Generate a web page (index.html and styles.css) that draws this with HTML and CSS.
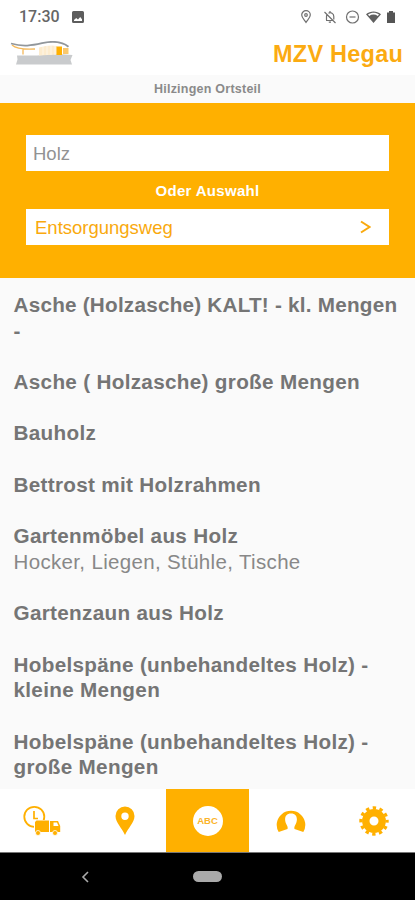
FILE: index.html
```html
<!DOCTYPE html>
<html lang="de">
<head>
<meta charset="utf-8">
<meta name="viewport" content="width=device-width">
<title>MZV Hegau</title>
<link rel="stylesheet" href="styles.css">
</head>
<body>
<div class="status">
  <span class="time">17:30</span>
  <svg class="photo" width="12" height="12" viewBox="0 0 12 12"><path fill="#5d5d5d" fill-rule="evenodd" d="M1.5 0h9A1.5 1.5 0 0 1 12 1.500v9a1.500 1.500 0 0 1-1.500 1.500h-9A1.500 1.500 0 0 1 0 10.500v-9A1.500 1.500 0 0 1 1.500 0zM2 10h8V8.200L8.200 6 6 8.500 4.200 7 2 9z"/></svg>
  <svg class="signals" width="96" height="16" viewBox="0 0 96 16" fill="none" stroke="#707070" stroke-width="1.200">
    <path d="M6 13.500C4 10.500 1.700 8.400 1.700 6a4.300 4.300 0 0 1 8.600 0C10.300 8.400 8 10.500 6 13.500z"/><circle cx="6" cy="6" r="1.300"/>
    <path d="M24.500 3l11 11M26 11.500h7.500M26.500 11V7.500c0-1 .3-1.700.8-2.300M28.500 4.200c2.200-1.200 5.300 0 5.300 3.300v3M30 2v1.500M28.800 13.200h2.200"/>
    <circle cx="52.500" cy="8" r="6"/><path d="M49.500 8h6"/>
    <path fill="#606060" stroke="none" fill-rule="evenodd" d="M66 5.200c4.500-3.700 10.500-3.700 15 0L73.500 14zM68 5.400l1.200 1.500c2.500-1.800 6-1.800 8.600 0L79 5.400c-3.200-2.200-7.500-2.200-11 0z"/>
    <path fill="#555" stroke="none" d="M87 3.500h2V2h4v1.500h2V14h-8z"/>
  </svg>
</div>
<header class="header">
  <svg class="logo" width="66" height="26" viewBox="0 0 66 26">
    <path fill="#c9cbcd" d="M7 14.500h20l20-1.500 15.500 1-2 5 1.500 4.500H6l1.500-5z"/>
    <path fill="#fdecce" d="M29 6.500q10-3 18-1.500v8.500l-18 1z"/>
    <path fill="#ffb000" d="M46.500 5.500h5.500v8.500h-5.500z"/><path fill="#f9c86d" d="M53 7h5.500v6H53z"/>
    <path stroke="#fff" stroke-width=".6" d="M33 5v9M37 5v9M41 4v10M45 4v10"/>
    <path fill="none" stroke="#f5b95a" stroke-width="1.300" d="M2 4c5 4.500 14 4.500 23 4M13 8v5.500"/>
    <path fill="none" stroke="#92979b" stroke-width="1.800" d="M1 2.500C13 6 22 4.500 32 2.200S51-.2 58.500 5.700"/>
  </svg>
  <h1 class="brand">MZV Hegau</h1>
</header>
<div class="place">Hilzingen Ortsteil</div>
<section class="search">
  <div class="field">Holz</div>
  <div class="or">Oder Auswahl</div>
  <div class="field choice"><span>Entsorgungsweg</span>
    <svg width="11" height="14" viewBox="0 0 11 14"><path d="M1 1.500L9.500 7 1 12.500" fill="none" stroke="#f9a90d" stroke-width="2"/></svg>
  </div>
</section>
<main class="list">
  <div class="item tight">Asche (Holzasche) KALT! - kl. Mengen<br>-</div>
  <div class="item">Asche ( Holzasche) große Mengen</div>
  <div class="item">Bauholz</div>
  <div class="item">Bettrost mit Holzrahmen</div>
  <div class="item">Gartenmöbel aus Holz<div class="sub">Hocker, Liegen, Stühle, Tische</div></div>
  <div class="item">Gartenzaun aus Holz</div>
  <div class="item">Hobelspäne (unbehandeltes Holz) -<br>kleine Mengen</div>
  <div class="item">Hobelspäne (unbehandeltes Holz) -<br>große Mengen</div>
</main>
<nav class="tabs">
  <div class="tab">
    <svg width="38" height="32" viewBox="0 0 38 32">
      <circle cx="11.300" cy="11.800" r="10" fill="none" stroke="#ffb000" stroke-width="1.800"/>
      <path d="M11 6v7.500H15" fill="none" stroke="#ffb000" stroke-width="1.700"/>
      <path fill="#fff" d="M11 15h26v17H11z"/>
      <g fill="#ffb000"><path d="M12 17l1.500-1.500h12.500v11.500H12z"/><path d="M27 16h8l2.200 5v6H27z"/></g>
      <g fill="#ffb000" stroke="#fff" stroke-width=".8"><circle cx="15" cy="28" r="2.500"/><circle cx="32" cy="28" r="2.500"/></g>
      <path fill="#fff" d="M30.500 17.500H34l1.500 3.500h-5z"/>
    </svg>
  </div>
  <div class="tab">
    <svg width="20" height="30" viewBox="0 0 20 30"><path fill="#ffb000" fill-rule="evenodd" d="M10 29C7 22 .5 16.500.5 10a9.500 9.500 0 0 1 19 0C19.500 16.500 13 22 10 29zM10 6.500a3.700 3.700 0 1 0 0 7.400 3.700 3.700 0 0 0 0-7.400z"/></svg>
  </div>
  <div class="tab active"><span class="abc">ABC</span></div>
  <div class="tab">
    <svg width="30" height="30" viewBox="0 0 30 30"><path fill="#ffb000" d="M2.700 26A14.300 14 0 1 1 27.300 26L18.500 23C18 21.500 18.500 20 19.500 18.500 22 14 21.500 7.500 15 7.500S8 14 10.500 18.500C11.500 20 12 21.500 11.500 23z"/></svg>
  </div>
  <div class="tab">
    <svg width="30" height="30" viewBox="0 0 30 30"><circle cx="15" cy="15" r="8.200" fill="none" stroke="#ffb000" stroke-width="7.400"/><circle cx="15" cy="15" r="13.100" fill="none" stroke="#ffb000" stroke-width="3.200" stroke-dasharray="3.430 3.430" stroke-dashoffset="1.715"/></svg>
  </div>
</nav>
<div class="system">
  <svg width="8" height="12" viewBox="0 0 8 12"><path d="M7 1L2 6l5 5" fill="none" stroke="#aaa" stroke-width="1.600"/></svg>
  <span class="home"></span>
  <span class="spacer"></span>
</div>
</body>
</html>
```

FILE: styles.css
```css
* { box-sizing: border-box; }
body {
  margin: 0;
  width: 415px;
  height: 900px;
  overflow: hidden;
  display: flex;
  flex-direction: column;
  background: #fafafa;
  font-family: "Liberation Sans", Arial, sans-serif;
}
svg { display: block; flex: none; }
.status {
  height: 34px;
  flex: none;
  background: #fff;
  display: flex;
  align-items: center;
  padding: 0 19px 1px 19px;
}
.time { font: 500 16px/20px Roboto, sans-serif; color: #666; width: 53px; padding-top: 1px; }
.signals { margin-left: auto; }
.header {
  height: 41px;
  flex: none;
  background: #fff;
  display: flex;
  justify-content: space-between;
  padding: 7px 12px 0 10px;
}
.brand { margin: 0; font-size: 23.500px; line-height: 26px; letter-spacing: .22px; color: #fbab12; }
.place {
  height: 28px;
  flex: none;
  text-align: center;
  font-size: 12.500px;
  font-weight: bold;
  line-height: 28px;
  letter-spacing: .24px;
  color: #8a8a8a;
}
.search { height: 175px; flex: none; background: #ffb000; padding: 32px 26px; }
.field {
  height: 36px;
  background: #fff;
  padding: 0 7px;
  font-size: 18.500px;
  line-height: 37px;
  color: #929292;
}
.or {
  height: 38px;
  line-height: 40px;
  text-align: center;
  font-size: 15px;
  font-weight: bold;
  letter-spacing: .32px;
  color: #fff;
}
.choice {
  display: flex;
  align-items: center;
  justify-content: space-between;
  padding: 0 18px 0 9px;
  color: #f9a90d;
}
.list { flex: 1; min-height: 0; overflow: hidden; padding: 14px 0 0 13.500px; }
.item {
  margin-bottom: 25.800px;
  font-size: 20.700px;
  font-weight: bold;
  line-height: 25.600px;
  letter-spacing: .31px;
  white-space: nowrap;
  color: #757575;
}
.tight { letter-spacing: .23px; }
.sub { font-size: 20.500px; font-weight: normal; letter-spacing: .34px; color: #888; }
.tabs {
  height: 64px;
  flex: none;
  display: grid;
  grid-template-columns: repeat(5, 1fr);
  background: #fff;
  border-bottom: 1px solid #777;
}
.tab { display: flex; align-items: center; justify-content: center; }
.active { background: #ffb000; }
.abc {
  width: 30px;
  height: 30px;
  border-radius: 50%;
  background: #fff;
  color: #fbb42a;
  font-size: 9.500px;
  font-weight: bold;
  line-height: 30px;
  text-align: center;
}
.system {
  height: 47px;
  flex: none;
  background: #000;
  display: flex;
  align-items: center;
  justify-content: space-between;
  padding: 0 81px;
}
.home { width: 29px; height: 11px; border-radius: 6px; background: #aaa; }
.spacer { width: 8px; }
```
